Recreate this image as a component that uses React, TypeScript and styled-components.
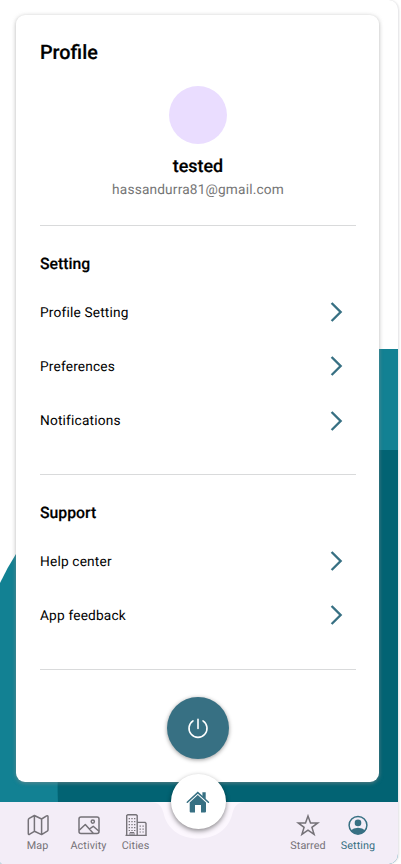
import React from "react";
import styled, { createGlobalStyle } from "styled-components";

const Global = createGlobalStyle`
  * { box-sizing: border-box; }
  body { margin: 0; background: #fff; font-family: Roboto, "Liberation Sans", sans-serif; text-rendering: geometricPrecision; }
`;

const PRIMARY = "#377083";

const Page = styled.div`
  position: relative;
  width: 401px;
  height: 864px;
  overflow: hidden;
  background: #fff;
`;
const Screen = styled.div`
  position: relative;
  width: 399px;
  height: 864px;
  overflow: hidden;
  border-right: 1px solid #e9e9eb;
  border-radius: 0 10px 10px 2px;
  box-shadow: 0 0 2px rgba(0, 0, 0, 0.15);
  display: flex;
  flex-direction: column;
`;
const Backdrop = styled.svg`
  position: absolute;
  inset: 0;
`;
const Card = styled.main`
  position: relative;
  width: 363px;
  height: 767px;
  margin: 15px 0 0 16px;
  padding: 25px 23px 0 24px;
  border-radius: 9px;
  background: #fff;
  box-shadow: 0 1px 4px rgba(140, 140, 140, 0.65);
  display: flex;
  flex-direction: column;
`;
const Title = styled.h1`
  margin: 0;
  font-size: 19.8px;
  font-weight: 500;
  line-height: 25px;
  -webkit-text-stroke: 0.2px #000;
`;
const Identity = styled.section`
  display: flex;
  flex-direction: column;
  align-items: center;
  height: 160px;
  padding-top: 21px;
`;
const Avatar = styled.div`
  width: 58px;
  height: 58px;
  border-radius: 50%;
  background: #eaddff;
`;
const Name = styled.div`
  margin-top: 12px;
  font-size: 17.9px;
  font-weight: 500;
  line-height: 22px;
  -webkit-text-stroke: 0.2px #000;
`;
const Email = styled.div`
  margin-top: 2px;
  font-size: 13.7px;
  line-height: 20px;
  letter-spacing: 0.17px;
  color: #757575;
`;
const Section = styled.section<{ $height: number }>`
  height: ${(p) => p.$height}px;
  border-top: 1px solid #d9dadb;
  padding-top: 28px;
`;
const Heading = styled.h2`
  margin: 0 0 11px;
  font-size: 15.8px;
  font-weight: 500;
  line-height: 20px;
  -webkit-text-stroke: 0.15px #000;
`;
const Row = styled.div`
  display: flex;
  align-items: center;
  justify-content: space-between;
  height: 54.3px;
  padding-right: 13px;
  font-size: 13.7px;
  line-height: 17px;
  letter-spacing: 0.18px;
  color: #000;
`;
const RowLabel = styled.span`
  padding-top: 2px;
`;
const Footer = styled.div`
  border-top: 1px solid #d9dadb;
  display: flex;
  justify-content: center;
  padding-top: 27px;
`;
const PowerButton = styled.button`
  width: 62px;
  height: 62px;
  padding: 0;
  border: 0;
  border-radius: 50%;
  background: ${PRIMARY};
  box-shadow: 0 1px 4px rgba(0, 0, 0, 0.4);
  display: grid;
  place-items: center;
`;
const Nav = styled.nav`
  position: relative;
  height: 62.4px;
  margin-top: 19.6px;
  background: #f3edf7;
  display: flex;
  justify-content: space-between;
  padding: 11.4px 15px 0 15px;
`;
const Notch = styled.svg`
  position: absolute;
  left: 145px;
  top: 0;
`;
const Tabs = styled.div`
  display: flex;
`;
const Tab = styled.div<{ $width: number; $active?: boolean }>`
  width: ${(p) => p.$width}px;
  display: flex;
  flex-direction: column;
  align-items: center;
  gap: 0.6px;
  color: ${(p) => (p.$active ? PRIMARY : "#757278")};
  font-size: 10.8px;
  line-height: 15px;
  letter-spacing: 0.08px;
  white-space: nowrap;
  svg { display: block; }
`;
const HomeButton = styled.button`
  position: absolute;
  left: 170.5px;
  top: -27.6px;
  width: 55px;
  height: 55px;
  padding: 0;
  border: 0;
  border-radius: 50%;
  background: #fff;
  box-shadow: 0 2px 5px rgba(0, 0, 0, 0.45);
  display: grid;
  place-items: center;
`;

const Chevron = () => (
  <svg width="13" height="20" viewBox="0 0 13 20" fill="none" stroke={PRIMARY} strokeWidth="2.4">
    <path d="M1.6 1 10.6 10 1.6 19" />
  </svg>
);
const PowerIcon = () => (
  <svg width="22" height="22" viewBox="0 0 22 22" fill="none" stroke="#fff" strokeWidth="1.6" strokeLinecap="round">
    <path d="M11 2.2v9.3M6 3.9a9 9 0 1 0 10 0" />
  </svg>
);
const HomeIcon = () => (
  <svg width="24" height="22" viewBox="0 0 24 22">
    <path d="M1.3 11.3 11.8 1.6 22.4 11.3" fill="none" stroke={PRIMARY} strokeWidth="1.5" strokeLinecap="round" />
    <path d="M16.4 1.2h3.3v7l-3.3-3z" fill={PRIMARY} />
    <path d="M3.7 11.5 11.8 4l8.2 7.5v8.9a1 1 0 0 1-1 1h-4v-7.3H9v7.3H4.7a1 1 0 0 1-1-1z" fill={PRIMARY} />
  </svg>
);
const line = { width: 24, height: 24, viewBox: "0 0 24 24", fill: "none", stroke: "currentColor", strokeLinejoin: "round" as const };
const MapIcon = () => (
  <svg {...line} strokeWidth="1.5">
    <path d="M2.3 6.9Q2.3 5.9 3.2 5.3L8.4 2.5 15.6 6 20.6 2.9Q22 2.3 22 3.8V16.7Q22 17.6 21.2 18.2L15.6 21.6 8.4 18.3 3.7 21.2Q2.3 21.8 2.3 20.4zM8.4 2.5v15.8M15.6 6v15.6" />
  </svg>
);
const PictureIcon = () => (
  <svg {...line} strokeWidth="1.5">
    <rect x="2" y="4" width="20" height="16.4" rx="2" />
    <circle cx="15.8" cy="8.6" r="1.6" />
    <path d="M2.2 17.3 8.3 11.5 16.2 20.2M12.4 16 16.2 13.3 22 18.2" />
  </svg>
);
const CityIcon = () => (
  <svg {...line} strokeWidth="1.4">
    <path d="M2.7 22.2V2.6l1-.8h8.5l1 .8v19.6M13.3 9.4h7.7l1 .8v12M1.5 22.4h21.3" />
    <path d="M5.3 5v13M8 5v13M10.7 5v13M16.2 12.4v7M19.1 12.4v7" strokeWidth="1.3" strokeDasharray="1.3 1.7" />
    <path d="M6 22.2v-2.7h4v2.7M8 19.5v2.7" strokeWidth="1" />
  </svg>
);
const StarIcon = () => (
  <svg {...line} strokeWidth="1.5" strokeLinejoin="miter">
    <path d="m12 2.9 2.5 7h7.3l-5.9 4.4 2.2 7.1-6.1-4.3-6.1 4.3 2.2-7.1-5.9-4.4h7.3z" />
  </svg>
);
const AccountIcon = () => (
  <svg width="24" height="24" viewBox="0 0 24 24">
    <circle cx="12" cy="12.3" r="8.9" fill="none" stroke={PRIMARY} strokeWidth="1.5" />
    <circle cx="12" cy="9.9" r="3.3" fill={PRIMARY} />
    <path d="M4.7 17.4Q7.4 14.8 12 14.8t7.3 2.6Q16.8 21 12 21t-7.3-3.6z" fill={PRIMARY} />
  </svg>
);

export default function App() {
  return (
    <Page>
      <Global />
      <Screen>
        <Backdrop width="398" height="864" viewBox="0 0 398 864">
          <path d="M0 583Q7 568 16 554L150 349H398V864H0z" fill="#128193" />
          <path d="M58 803Q50 650 200 450H398V803z" fill="#026373" />
        </Backdrop>
        <Card>
          <Title>Profile</Title>
          <Identity>
            <Avatar />
            <Name>tested</Name>
            <Email>hassandurra81@gmail.com</Email>
          </Identity>
          <Section $height={249}>
            <Heading>Setting</Heading>
            {["Profile Setting", "Preferences", "Notifications"].map((t) => (
              <Row key={t}><RowLabel>{t}</RowLabel><Chevron /></Row>
            ))}
          </Section>
          <Section $height={195}>
            <Heading>Support</Heading>
            {["Help center", "App feedback"].map((t) => (
              <Row key={t}><RowLabel>{t}</RowLabel><Chevron /></Row>
            ))}
          </Section>
          <Footer>
            <PowerButton aria-label="Log out"><PowerIcon /></PowerButton>
          </Footer>
        </Card>
        <Nav>
          <Notch width="106" height="38" viewBox="0 0 106 38">
            <path d="M5 0C14 0 16.5 4 18.5 11C22 27 35 36.5 53 36.5S84 27 87.5 11C89.5 4 92 0 101 0z" fill="#fcf7fe" />
          </Notch>
          <Tabs>
            <Tab $width={45}><MapIcon />Map</Tab>
            <Tab $width={57}><PictureIcon />Activity</Tab>
            <Tab $width={37}><CityIcon />Cities</Tab>
          </Tabs>
          <Tabs>
            <Tab $width={50}><StarIcon />Starred</Tab>
            <Tab $width={50} $active><AccountIcon />Setting</Tab>
          </Tabs>
          <HomeButton aria-label="Home"><HomeIcon /></HomeButton>
        </Nav>
      </Screen>
    </Page>
  );
}
